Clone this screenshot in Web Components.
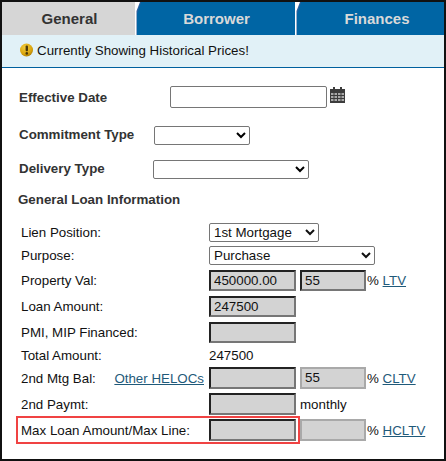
<!DOCTYPE html>
<html>
<head>
<meta charset="utf-8">
<title>General</title>
<style>
html, body { margin: 0; padding: 0; background: #fff; }
body { font: 13.33px "Liberation Sans", Arial, sans-serif; color: #111; }
</style>
</head>
<body>
<loan-panel>
  <tab-bar>
    <tab-item active style="width:133px;padding-left:2px">General</tab-item>
    <tab-item style="width:160px;padding-left:3px">Borrower</tab-item>
    <tab-item style="width:147px;padding-left:17px">Finances</tab-item>
  </tab-bar>
  <alert-bar>Currently Showing Historical Prices!</alert-bar>
  <loan-form>
    <top-row label="Effective Date" labelw="151" h="22" mt="18" lift="0">
      <input type="text" style="width:157px;height:22px">
      <cal-icon></cal-icon>
    </top-row>
    <top-row label="Commitment Type" labelw="135" h="19" mt="18" lift="2">
      <select style="width:96px"><option></option></select>
    </top-row>
    <top-row label="Delivery Type" labelw="134" h="19" mt="15" lift="2">
      <select style="width:156px"><option></option></select>
    </top-row>
    <section-title>General Loan Information</section-title>
    <field-row label="Lien Position:" h="19" mt="15">
      <select style="width:110px"><option>1st Mortgage</option></select>
    </field-row>
    <field-row label="Purpose:" h="19" mt="4">
      <select style="width:166px"><option>Purchase</option></select>
    </field-row>
    <field-row label="Property Val:" h="21" mt="5">
      <gray-box>450000.00</gray-box><gray-box w="66">55</gray-box>
      <suffix-link pre="% ">LTV</suffix-link>
    </field-row>
    <field-row label="Loan Amount:" h="21" mt="5"><gray-box>247500</gray-box></field-row>
    <field-row label="PMI, MIP Financed:" h="21" mt="5"><gray-box></gray-box></field-row>
    <field-row label="Total Amount:" h="16" mt="4"><span>247500</span></field-row>
    <field-row label="2nd Mtg Bal:" link="Other HELOCs" h="22" mt="4">
      <gray-box></gray-box><gray-box w="66" disabled>55</gray-box>
      <suffix-link pre="% ">CLTV</suffix-link>
    </field-row>
    <field-row label="2nd Paymt:" h="22" mt="4"><gray-box></gray-box><span>monthly</span></field-row>
    <field-row label="Max Loan Amount/Max Line:" h="22" mt="4" flagged>
      <gray-box slot="flagged"></gray-box>
      <gray-box w="66" disabled></gray-box>
      <suffix-link pre="% ">HCLTV</suffix-link>
    </field-row>
  </loan-form>
</loan-panel>

<script>
class LoanPanel extends HTMLElement {
  constructor() {
    super()
    this.attachShadow({mode: "open"}).innerHTML = `
      <style>
      :host { display: block; box-sizing: border-box; width: 446px; height: 461px; border: 2px solid #111; overflow: hidden; background: #fff; }
      </style>
      <slot></slot>`
  }
}
class TabBar extends HTMLElement {
  constructor() {
    super()
    this.attachShadow({mode: "open"}).innerHTML = `
      <style>
      :host { display: flex; height: 33px; background: #0065a4; }
      </style>
      <slot></slot>`
  }
}
class TabItem extends HTMLElement {
  constructor() {
    super()
    this.attachShadow({mode: "open"}).innerHTML = `
      <style>
      :host { display: flex; box-sizing: border-box; position: relative; align-items: center; justify-content: center; flex: none; height: 33px; font: bold 15px "Liberation Sans", Arial, sans-serif; color: #d9d9d9; background: #0065a4; padding-top: 3px; padding-bottom: 4px; }
      :host([active]) { background: #d6d6d6; color: #333; }
      .notch { position: absolute; left: 0; top: 0; width: 6px; height: 33px; display: block; }
      :host([active]) .notch { display: none; }
      </style>
      <svg class="notch" viewBox="0 0 6 33"><rect width="6" height="33" fill="#0065a4"/><path d="M0 0H6L2 12V33H0Z" fill="#2b5f9f"/><path d="M0 0H5L1.5 9V33H0Z" fill="#fff"/></svg>
      <slot></slot>`
  }
}
class AlertBar extends HTMLElement {
  constructor() {
    super()
    this.attachShadow({mode: "open"}).innerHTML = `
      <style>
      :host { display: flex; box-sizing: border-box; align-items: center; gap: 4px; height: 33px; padding: 0 0 2px 18px; background: #e1f1f7; border-bottom: 1px solid #00609e; color: #111; font-size: 13.33px; }
      svg { width: 13px; height: 14px; flex: none; }
      </style>
      <svg viewBox="0 0 13 14">
        <defs><radialGradient id="g" cx=".4" cy=".3" r=".8"><stop offset="0" stop-color="#f2cd3c"/><stop offset=".65" stop-color="#d9a30c"/><stop offset="1" stop-color="#9c7208"/></radialGradient></defs>
        <circle cx="6.5" cy="7" r="6.5" fill="url(#g)"/>
        <rect x="5.6" y="2.6" width="2.4" height="5.6" rx="1" fill="#4a3808"/>
        <circle cx="6.8" cy="10.4" r="1.3" fill="#4a3808"/>
      </svg>
      <span><slot></slot></span>`
  }
}
class LoanForm extends HTMLElement {
  constructor() {
    super()
    this.attachShadow({mode: "open"}).innerHTML = `
      <style>
      :host { display: flex; flex-direction: column; }
      </style>
      <slot></slot>`
  }
}
class TopRow extends HTMLElement {
  constructor() {
    super()
    const root = this.attachShadow({mode: "open"})
    root.innerHTML = `
      <style>
      :host { display: flex; align-items: center; padding-left: 17px; font-weight: bold; color: #333; font-size: 13.33px; }
      label { flex: none; }
      ::slotted(input), ::slotted(select) { box-sizing: border-box; margin: 0; font: 13.33px "Liberation Sans", Arial, sans-serif; border: 1px solid #767676; border-radius: 2px; background: #fff; padding: 1px 2px; }
      ::slotted(select) { height: 19px; padding: 0; }
      </style>
      <label></label><slot></slot>`
    const l = root.querySelector("label")
    l.textContent = this.getAttribute("label")
    l.style.width = this.getAttribute("labelw") + "px"
    l.style.paddingBottom = this.getAttribute("lift") + "px"
    this.style.height = this.getAttribute("h") + "px"
    this.style.marginTop = this.getAttribute("mt") + "px"
  }
}
class CalIcon extends HTMLElement {
  constructor() {
    super()
    this.attachShadow({mode: "open"}).innerHTML = `
      <style>
      :host { display: block; width: 15px; height: 16px; margin-left: 3px; margin-top: -4px; }
      svg { display: block; }
      </style>
      <svg width="15" height="16" viewBox="0 0 15 16">
        <path d="M3 0h2v2h5V0h2v2h3v14H0V2h3Z" fill="#3c3c3c"/>
        <g fill="#aaa">
          <rect x="1" y="6" width="2.5" height="2"/><rect x="4.5" y="6" width="2.5" height="2"/><rect x="8" y="6" width="2.5" height="2"/><rect x="11.5" y="6" width="2.5" height="2"/>
          <rect x="1" y="9" width="2.5" height="2"/><rect x="4.5" y="9" width="2.5" height="2"/><rect x="8" y="9" width="2.5" height="2"/><rect x="11.5" y="9" width="2.5" height="2"/>
          <rect x="1" y="12" width="2.5" height="2"/><rect x="4.5" y="12" width="2.5" height="2"/><rect x="8" y="12" width="2.5" height="2"/><rect x="11.5" y="12" width="2.5" height="2"/>
        </g>
      </svg>`
  }
}
class SectionTitle extends HTMLElement {
  constructor() {
    super()
    this.attachShadow({mode: "open"}).innerHTML = `
      <style>
      :host { display: block; margin-top: 13px; padding-left: 16px; height: 16px; line-height: 16px; font-weight: bold; font-size: 13.33px; color: #333; }
      </style>
      <slot></slot>`
  }
}
class FieldRow extends HTMLElement {
  constructor() {
    super()
    const root = this.attachShadow({mode: "open"})
    const flagged = this.hasAttribute("flagged")
    const link = this.getAttribute("link")
    root.innerHTML = `
      <style>
      :host { display: flex; align-items: center; padding-left: 19px; color: #111; font-size: 13.33px; }
      .cell { display: flex; align-items: center; width: 188px; flex: none; justify-content: space-between; padding-right: 5px; box-sizing: border-box; }
      .rest { display: flex; align-items: center; gap: 4px; }
      .flag { display: flex; align-items: center; box-sizing: border-box; flex: none; width: 284px; height: 28px; margin-left: -5px; padding-left: 3px; padding-right: 2px; border: 2px solid #f04343; }
      a { color: #1f5a7a; text-decoration: underline; }
      ::slotted(select) { box-sizing: border-box; height: 19px; margin: 0; padding: 0; font: 13.33px "Liberation Sans", Arial, sans-serif; border: 1px solid #767676; border-radius: 2px; background: #fff; color: #111; }
      </style>
      ${flagged
        ? `<div class="flag"><div class="cell"><span class="t"></span></div><slot name="flagged"></slot></div><div class="rest"><slot></slot></div>`
        : `<div class="cell"><span class="t"></span>${link ? `<a href="#"></a>` : ""}</div><div class="rest"><slot></slot></div>`}`
    root.querySelector(".t").textContent = this.getAttribute("label")
    if (link) root.querySelector("a").textContent = link
    this.style.height = this.getAttribute("h") + "px"
    this.style.marginTop = this.getAttribute("mt") + "px"
  }
}
class GrayBox extends HTMLElement {
  constructor() {
    super()
    this.attachShadow({mode: "open"}).innerHTML = `
      <style>
      :host { display: block; box-sizing: border-box; flex: none; width: 87px; height: 21px; line-height: 17px; padding: 0 3px; font-size: 13.33px; white-space: nowrap; overflow: hidden; background: #d3d3d3; color: #111; border: 2px solid; border-color: #222 #767676 #767676 #222; }
      :host([disabled]) { border-color: #a9a9a9; }
      </style>
      <slot></slot>`
    const w = this.getAttribute("w")
    if (w) this.style.width = w + "px"
    if (this.parentElement && this.parentElement.getAttribute("h") === "22") this.style.height = "22px"
  }
}
class SuffixLink extends HTMLElement {
  constructor() {
    super()
    const root = this.attachShadow({mode: "open"})
    root.innerHTML = `
      <style>
      :host { display: flex; color: #111; margin-left: -3px; }
      span { white-space: pre; }
      a { color: #1f5a7a; text-decoration: underline; }
      </style>
      <span></span><a href="#"><slot></slot></a>`
    root.querySelector("span").textContent = this.getAttribute("pre")
  }
}
customElements.define("loan-panel", LoanPanel)
customElements.define("tab-bar", TabBar)
customElements.define("tab-item", TabItem)
customElements.define("alert-bar", AlertBar)
customElements.define("loan-form", LoanForm)
customElements.define("top-row", TopRow)
customElements.define("cal-icon", CalIcon)
customElements.define("section-title", SectionTitle)
customElements.define("field-row", FieldRow)
customElements.define("gray-box", GrayBox)
customElements.define("suffix-link", SuffixLink)
</script>
</body>
</html>
